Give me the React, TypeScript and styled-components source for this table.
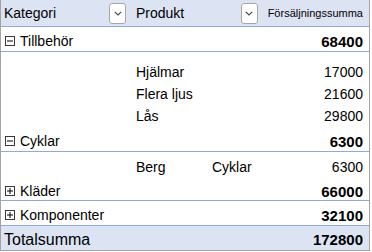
import React from 'react'
import styled, { createGlobalStyle } from 'styled-components'

const GlobalStyle = createGlobalStyle`
  html, body {
    margin: 0;
    padding: 0;
    background: #ffffff;
  }
  body {
    font-family: 'Liberation Sans', Arial, sans-serif;
    color: #000000;
  }
`

interface Product {
  name: string
  extra?: string
  value: number
}

interface Category {
  name: string
  total: number
  expanded: boolean
  products: Product[]
}

const categories: Category[] = [
  {
    name: 'Tillbehör',
    total: 68400,
    expanded: true,
    products: [
      { name: 'Hjälmar', value: 17000 },
      { name: 'Flera ljus', value: 21600 },
      { name: 'Lås', value: 29800 },
    ],
  },
  {
    name: 'Cyklar',
    total: 6300,
    expanded: true,
    products: [{ name: 'Berg', extra: 'Cyklar', value: 6300 }],
  },
  { name: 'Kläder', total: 66000, expanded: false, products: [] },
  { name: 'Komponenter', total: 32100, expanded: false, products: [] },
]

const ExpandBox: React.FC<{ expanded: boolean }> = ({ expanded }) => (
  <ToggleIcon width="10" height="10" viewBox="0 0 10 10">
    <rect x="0.5" y="0.5" width="9" height="9" fill="#ffffff" stroke="#3a3a3a" strokeWidth="1" />
    <path d="M2 5h6" stroke="#000000" strokeWidth="1" />
    {!expanded && <path d="M5 2v6" stroke="#000000" strokeWidth="1" />}
  </ToggleIcon>
)

const DropButton: React.FC = () => (
  <FilterButton>
    <svg width="8" height="5" viewBox="0 0 8 5">
      <path d="M0.8 0.8L4 3.9L7.2 0.8" fill="none" stroke="#444444" strokeWidth="1.1" />
    </svg>
  </FilterButton>
)

const App: React.FC = () => {
  return (
    <>
      <GlobalStyle />
      <Pivot>
        <HeaderRow>
          <HeaderCell>
            <span>Kategori</span>
            <DropButton />
          </HeaderCell>
          <HeaderCell>
            <span>Produkt</span>
            <DropButton />
          </HeaderCell>
          <ValueHeader>Försäljningssumma</ValueHeader>
        </HeaderRow>

        {categories.map((cat, i) => (
          <React.Fragment key={cat.name}>
            <CategoryRow $height={i === 2 ? 23 : 25}>
              <CategoryLabel>
                <ExpandBox expanded={cat.expanded} />
                <span>{cat.name}</span>
              </CategoryLabel>
              <span />
              <Total>{cat.total}</Total>
            </CategoryRow>
            {cat.expanded && (
              <ProductGroup $top={i === 0 ? 9 : 4}>
                {cat.products.map(p => (
                  <ProductRow key={p.name}>
                    <span />
                    <ProductName>
                      <ProductCell>{p.name}</ProductCell>
                      {p.extra && <span>{p.extra}</span>}
                    </ProductName>
                    <Amount>{p.value}</Amount>
                  </ProductRow>
                ))}
              </ProductGroup>
            )}
          </React.Fragment>
        ))}

        <GrandTotalRow>
          <GrandLabel>Totalsumma</GrandLabel>
          <span />
          <Total>172800</Total>
        </GrandTotalRow>
      </Pivot>
    </>
  )
}

export default App

const Pivot = styled.div`
  width: 370px;
  height: 251px;
  box-sizing: border-box;
  border: 1px solid #a3a3a3;
  border-top: none;
  display: flex;
  flex-direction: column;
  overflow: hidden;
`

const gridCols = `
  display: grid;
  grid-template-columns: 132px 1fr auto;
  align-items: center;
  padding: 0 6px 0 3px;
  box-sizing: border-box;
`

const HeaderRow = styled.div`
  ${gridCols}
  height: 27px;
  flex: none;
  background: #dce4f3;
  border-bottom: 1px solid #8eaadb;
  font-size: 14px;
`

const HeaderCell = styled.div`
  display: flex;
  align-items: center;
  justify-content: space-between;
  padding-right: 10px;
`

const ValueHeader = styled.div`
  font-size: 11px;
  text-align: right;
`

const FilterButton = styled.div`
  width: 17px;
  height: 21px;
  box-sizing: border-box;
  border: 1px solid #a6a6a6;
  border-radius: 3px;
  background: #ffffff;
  display: flex;
  align-items: center;
  justify-content: center;
`

const CategoryRow = styled.div<{ $height: number }>`
  ${gridCols}
  height: ${p => p.$height}px;
  flex: none;
  padding-top: 4px;
  border-bottom: 1px solid #8eaadb;
  font-size: 14px;
`

const CategoryLabel = styled.div`
  display: flex;
  align-items: center;
  gap: 5px;
  padding-left: 1px;
  white-space: nowrap;
`

const ToggleIcon = styled.svg`
  flex: none;
`

const Total = styled.div`
  font-size: 15px;
  font-weight: bold;
  text-align: right;
`

const ProductGroup = styled.div<{ $top: number }>`
  display: flex;
  flex-direction: column;
  flex: none;
  padding-top: ${p => p.$top}px;
`

const ProductRow = styled.div`
  ${gridCols}
  height: 22px;
  font-size: 14px;
`

const ProductName = styled.div`
  display: flex;
  align-items: center;
`

const ProductCell = styled.span`
  width: 76px;
`

const Amount = styled.div`
  font-size: 14px;
  text-align: right;
`

const GrandTotalRow = styled.div`
  ${gridCols}
  flex: 1;
  padding-top: 3px;
  background: #dce4f3;
`

const GrandLabel = styled.div`
  font-size: 16px;
  white-space: nowrap;
`
